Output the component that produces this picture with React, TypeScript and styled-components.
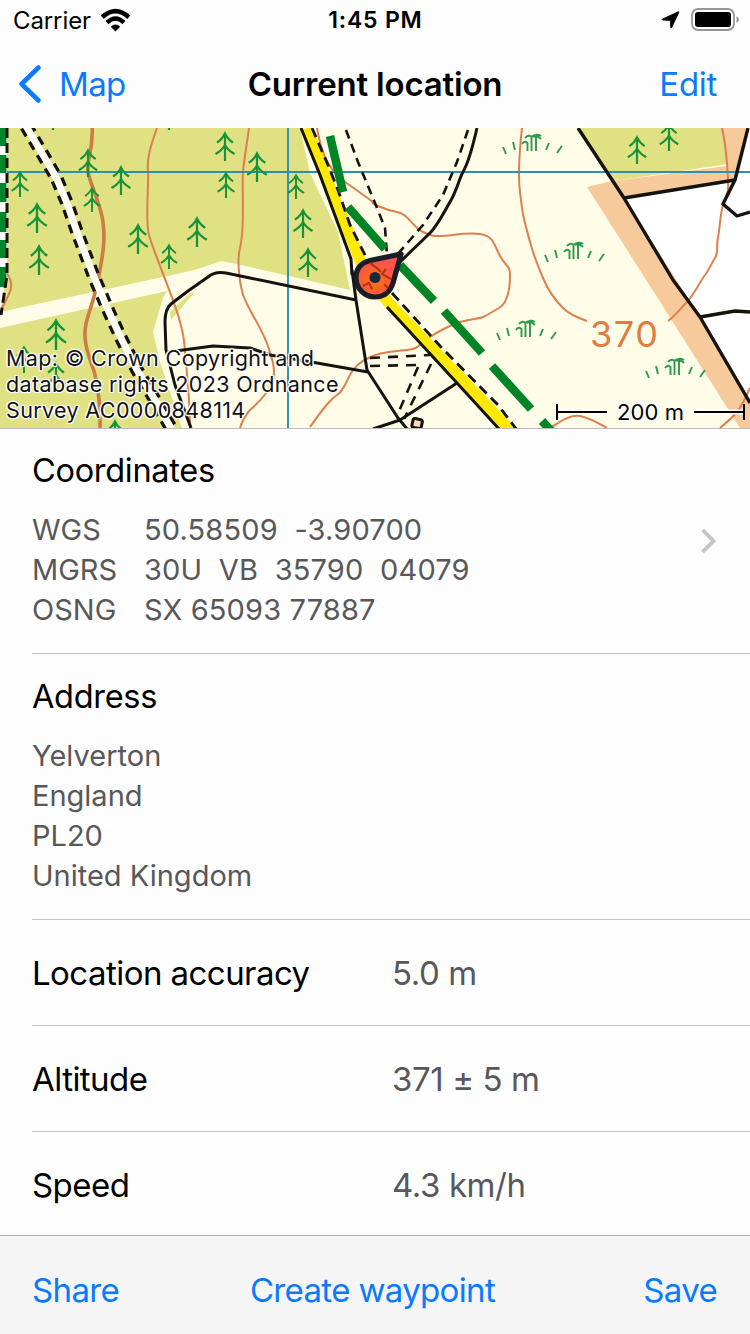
import React from "react";
import styled, { createGlobalStyle } from "styled-components";

const Global = createGlobalStyle`
  body { margin: 0; background: #fdfdfd; }
  * { box-sizing: border-box; }
`;

const Screen = styled.div`
  width: 750px;
  height: 1334px;
  display: flex;
  flex-direction: column;
  overflow: hidden;
  background: #fdfdfd;
  color: #000;
  font-family: Inter, "Liberation Sans", sans-serif;
`;

const StatusBar = styled.header`
  flex: none;
  height: 40px;
  padding: 0 12px 0 13px;
  display: grid;
  grid-template-columns: 1fr auto 1fr;
  align-items: center;
  font-size: 24px;
`;

const StatusGroup = styled.div<{ $end?: boolean }>`
  display: flex;
  align-items: center;
  justify-content: ${(p) => (p.$end ? "flex-end" : "flex-start")};
  gap: ${(p) => (p.$end ? "11px" : "9px")};
  margin-right: ${(p) => (p.$end ? "-1px" : "0")};
`;

const Carrier = styled.span`
  letter-spacing: -0.1px;
`;

const Clock = styled.span`
  font-weight: 600;
  font-size: 23px;
  letter-spacing: 0.8px;
`;

const NavBar = styled.nav`
  flex: none;
  height: 88px;
  padding: 0 33px;
  display: grid;
  grid-template-columns: 1fr auto 1fr;
  align-items: center;
`;

const TextButton = styled.button<{ $end?: boolean; $back?: boolean; $tight?: boolean }>`
  display: flex;
  align-items: center;
  gap: 17px;
  justify-self: ${(p) => (p.$end ? "end" : "start")};
  margin-left: ${(p) => (p.$back ? "-15px" : "0")};
  padding: 0;
  border: 0;
  background: none;
  color: #0a7aff;
  font: inherit;
  font-size: 33px;
  line-height: 40px;
  letter-spacing: ${(p) => (p.$tight ? "-0.65px" : "-0.3px")};
`;

const Title = styled.h1`
  margin: 0;
  font-size: 33px;
  line-height: 40px;
  font-weight: 600;
  letter-spacing: -0.2px;
`;

const MapPanel = styled.div`
  flex: none;
  position: relative;
  height: 301px;
  border-bottom: 1px solid #bcbcc0;
  svg { display: block; }
`;

const Attribution = styled.p`
  position: absolute;
  left: 6px;
  bottom: 5px;
  width: 345px;
  margin: 0;
  font-size: 21.5px;
  line-height: 26px;
  letter-spacing: 0.36px;
  color: #111;
  text-shadow: 1px 0 1px #fff, -1px 0 1px #fff, 0 1px 1px #fff, 0 -1px 1px #fff,
    1px 1px 1px #fff, -1px -1px 1px #fff, 1px -1px 1px #fff, -1px 1px 1px #fff;
`;

const Details = styled.main`
  flex: 1;
  min-height: 0;
  overflow: hidden;
  padding-left: 32px;
`;

const Section = styled.section<{ $h: number; $top: number }>`
  height: ${(p) => p.$h}px;
  padding: ${(p) => p.$top}px 33px 0 0;
  border-bottom: 1px solid #c3c3c6;
`;

const Heading = styled.h2`
  margin: 0 0 18px;
  font-size: 32.5px;
  line-height: 42px;
  font-weight: 400;
  letter-spacing: -0.3px;
`;

const CoordBlock = styled.div`
  display: flex;
  justify-content: space-between;
`;

const CoordTable = styled.dl`
  margin: 0;
  display: grid;
  grid-template-columns: 112px auto;
  font-size: 29px;
  line-height: 40px;
  color: #58585b;
  white-space: pre;
  dt, dd { margin: 0; }
  dd { letter-spacing: 0.15px; }
`;

const Disclosure = styled.svg`
  margin-top: 18px;
`;

const AddressLines = styled.address`
  font-style: normal;
  font-size: 29px;
  line-height: 40px;
  color: #58585b;
  white-space: pre-line;
`;

const ValueRow = styled.div<{ $last?: boolean }>`
  height: 106px;
  display: grid;
  grid-template-columns: 360px 1fr;
  align-items: center;
  border-bottom: ${(p) => (p.$last ? "0" : "1px solid #c3c3c6")};
  font-size: 33px;
  letter-spacing: -0.55px;
`;

const Value = styled.span`
  color: #58585b;
  letter-spacing: -0.4px;
`;

const Toolbar = styled.footer`
  flex: none;
  height: 99px;
  padding: 10px 33px 0 32px;
  display: grid;
  grid-template-columns: 1fr auto 1fr;
  column-gap: 0;
  align-items: center;
  background: #f5f5f5;
  border-top: 1px solid #b0b0b2;
`;

const ToolbarCentre = styled.div`
  margin-right: 4px;
`;

const WifiIcon = () => (
  <svg width="31" height="24" viewBox="0 0 31 24" fill="none" stroke="#000" strokeWidth="4.600">
    <path d="M2.200 9.200Q15.500-3 28.800 9.200" />
    <path d="M7 14.600Q15.500 6.600 24 14.600" strokeWidth="4.300" />
    <path d="M10.800 18.700Q15.500 14.400 20.200 18.700L15.500 23.400Z" fill="#000" stroke="none" />
  </svg>
);

const LocationIcon = () => (
  <svg width="19" height="18" viewBox="0 0 19 18" stroke="#000" strokeWidth="0.800">
    <path d="M17.200.8Q18.200.4 17.800 1.400L10.800 16.400Q10 17.800 9.700 16.400L9.300 9.400 1.800 9Q.4 8.600 1.700 7.900Z" />
  </svg>
);

const BatteryIcon = () => (
  <svg width="48" height="24" viewBox="0 0 48 24">
    <rect x="1" y="1" width="42" height="21" rx="6" fill="none" stroke="#979797" strokeWidth="1.800" />
    <rect x="4" y="4" width="36" height="15" rx="3" />
    <path d="M45.500 8Q48 9.500 48 11.500T45.500 15Z" fill="#979797" />
  </svg>
);

const BackIcon = () => (
  <svg width="24" height="40" viewBox="0 0 24 40" fill="none" stroke="#0a7aff" strokeWidth="4.600" strokeLinecap="round" strokeLinejoin="round">
    <path d="M20.500 3.500L3.500 20 20.500 36.500" />
  </svg>
);

const Tree = ({ x, y, h = 28 }: { x: number; y: number; h?: number }) => (
  <path
    transform={`translate(${x} ${y}) scale(${h / 28})`}
    d="M0 0V28M-8 9.500Q-3 6.500 0 0.500Q3 6.500 8 9.500M-9.500 21Q-3 17.500 0 12Q3 17.500 9.500 21"
  />
);

const TREES: [number, number, number][] = [
  [20, 172, 25], [37, 204, 29], [39, 246, 29], [88, 150, 27], [92, 188, 24], [121, 167, 28],
  [138, 225, 29], [169, 245, 24], [197, 218, 29], [225, 133, 28], [226, 173, 25], [257, 153, 29],
  [296, 175, 24], [303, 210, 28], [308, 249, 28], [637, 137, 27], [669, 124, 27], [56, 320, 30],
  [56, 363, 28], [24, 347, 26], [115, 421, 28], [53, 102, 28], [169, 103, 27],
];

const BRACKEN: [number, number][] = [[532, 142], [574, 250], [526, 328], [675, 366]];

const MapView = () => (
  <svg width="750" height="300" viewBox="0 128 750 300" fill="none">
    <defs>
      <radialGradient id="pinFill" cx="0.42" cy="0.6" r="0.6">
        <stop offset="0" stopColor="#ff7a1c" />
        <stop offset="0.350" stopColor="#fb6424" />
        <stop offset="0.700" stopColor="#fa5550" />
      </radialGradient>
    </defs>
    <rect y="128" width="750" height="300" fill="#fffde8" />
    {/* woodland */}
    <path fill="#dfe182" d="M0 128H300L310 173 338 232 350 290 250 267 222 261 194 270 163 277 0 312Z" />
    <path fill="#dfe182" d="M0 328L167 291 163 298 153 332 160 362 182 428H0Z" />
    <path fill="#dfe182" d="M176 314L171 320 170 312 190 293 195 292Z" />
    {/* enclosed fields and moor edge */}
    <path fill="#fff" d="M624 198L735 180 748 128H750V403L700 317Z" />
    <path fill="#dfe182" d="M578 128H722L728 164 613 181Z" />
    <path fill="#f7ca9b" d="M720 128H747L735 180 624 198 613 181 727 166Z" />
    <path fill="#f7ca9b" d="M587 187L612 181 624 198 700 317 750 403V428H740L643 275Z" />

    {/* contours */}
    <g stroke="#dd7f4e" strokeWidth="2">
      <path d="M92 125C94 150 86 160 88 172S101 205 103 222 104 250 98 280 84 320 85 337 93 365 95 375 101 400 100 428" stroke="#cd7d42" strokeWidth="3.600" />
      <path d="M157 128C149 150 147 160 148 172S145 220 149 235 172 295 178 315 184 340 185 352 190 400 190 428" />
      <path d="M249 128C246 150 244 160 243 172S244 215 242 235 237 250 239 272 245 300 250 310 264 332 270 352 279 385 250 410Q243 418 240 428" />
      <path d="M0 262L8 275Q14 284 9 294T0 312" />
      <path d="M317 128C320 145 325 168 345 182S375 203 373 203 385 210 397 212 413 228 423 232 430 236 440 236 466 232 480 234 494 245 500 256 510 265 510 275 509 302 499 308 487 315 483 317 467 319 457 323 442 329 430 337 419 349 407 350 380 353 373 356 359 362 353 370 345 390 337 395 320 413 310 427" />
      <path d="M522 128C520 145 519 160 519 175S521 198 522 208 527 230 530 242 538 266 543 278 557 302 563 308 575 317 587 321" />
      <path d="M722 128C726 145 727 160 728 178S726 195 723 205 720 228 718 237 719 252 715 258 709 270 705 275 693 296 687 302 675 316 668 321" />
      <path d="M550 428C560 422 570 414 580 416S600 424 607 428M720 428Q732 418 737 412T750 388" />
    </g>

    {/* grid */}
    <path d="M0 172H750M288 128V428" stroke="#2b90b4" strokeWidth="1.900" />

    <g stroke="#17933a" strokeWidth="2.200">
      {TREES.map(([x, y, h]) => <Tree key={`${x}-${y}`} x={x} y={y} h={h} />)}
    </g>
    <g stroke="#2a9a4c" strokeWidth="1.900">
      {BRACKEN.map(([x, y]) => (
        <path
          key={x}
          transform={`translate(${x} ${y})`}
          d="M-29 5l3 7M-19 0l2 8M17 1l-3 7M30 4l-5 7M-10 2q3-4 5.500-1v8M-7-4q4-4 6.500-1v14M1-5q4-2 8 2M-1-5q5-4 10-1M4-5v14"
        />
      ))}
    </g>

    {/* bridleway along the western edge */}
    <path d="M0 128H7V275L0 312Z" fill="#fff" />
    <path d="M2 128V146M2 155V173M2 183V202M2 212V232M2 240V258M2 267V287" stroke="#00872c" strokeWidth="9" />
    <path d="M7 128V275L1 315" stroke="#15130d" strokeWidth="3" strokeDasharray="10 5" />
    <path d="M26 126L39 148 56 177 67 203 77 232 94 277 109 312 122 340 137 370 155 400 172 430" stroke="#15130d" strokeWidth="13.500" strokeDasharray="9 6.500" />
    <path d="M26 126L39 148 56 177 67 203 77 232 94 277 109 312 122 340 137 370 155 400 172 430" stroke="#fffef4" strokeWidth="7" />

    {/* walls */}
    <g stroke="#15130d" strokeWidth="3" strokeLinejoin="round">
      <path d="M356 300L250 278 226 273Q215 271 208 277L188 291 171 304Q165 309 165 322L166 350 175 385 191 428" />
      <path d="M168 352L213 346 250 348 270 355 317 363 368 372" />
      <path d="M352 270L356 300 367 370 398 418 408 430M373 429L400 420 457 383" />
      <path d="M477 128C472 150 467 165 463 172S457 190 450 202 437 226 430 233 410 252 398 264" />
      <path d="M578 128L624 198 673 280 700 317 750 403M624 198L735 180M748 128L735 180 723 204 737 216 750 212M700 317L735 311 750 312" strokeWidth="3.400" />
    </g>

    {/* footpaths */}
    <g stroke="#15130d" strokeWidth="2.600" strokeDasharray="9 6">
      <path d="M346 130L358 162 375 203 385 228 387 255M468 130L457 162 443 195 423 225 396 256" />
    </g>
    <g stroke="#15130d" strokeWidth="2.600" strokeDasharray="10 8">
      <path d="M370 358L430 355M370 366L416 365M418 367L397 416M431 364L404 419" />
    </g>

    {/* lane */}
    <path d="M307 128L325 175 345 223 359 258 370 280 388 302 428 344 478 396 510 430" stroke="#ffe900" strokeWidth="11" />
    <path d="M301 128L320 175 340 229 351 259 352 275M387 307L457 383 500 430" stroke="#15130d" strokeWidth="3" />
    <path d="M312 128L328 165 338 190 350 225 366 257M392 293L440 346 498 405 517 430" stroke="#15130d" strokeWidth="2.800" strokeDasharray="10 6" />
    <rect x="412.500" y="419" width="9.500" height="9" rx="2" transform="rotate(12 417 423)" fill="#fbd9bd" stroke="#15130d" strokeWidth="3" />

    {/* bridleway */}
    <path d="M330 136L343 192M348 207L385 249M400 265L434 301M444 311L482 353M492 366L531 409M542 421L555 435" stroke="#008526" strokeWidth="8.500" />

    {/* current position */}
    <path d="M401 254L370 260.500C360 263 356 270 356 278A19 19 0 0 0 375 297C384 297 390 292 393 283Z" fill="url(#pinFill)" stroke="#1b1c24" strokeWidth="5.200" strokeLinejoin="round" />
    <path d="M370 263L377 268 381 272M386 269L382 274 391 279M363 286L369 283 372 289M384 284L388 288" stroke="#b8301c" strokeWidth="2.200" />
    <circle cx="375" cy="277.500" r="5.600" fill="#1b2a38" />

    <text x="590" y="347" fontFamily="Inter, sans-serif" fontSize="36" fill="#df7c40" textLength="68">370</text>
    <g stroke="#fff" strokeWidth="5">
      <path d="M557 412H607M694 412H745" />
    </g>
    <path d="M557 412H607M694 412H745M557 404V420M744 404V420" stroke="#000" strokeWidth="2" />
    <text x="617" y="420" fontFamily="Inter, sans-serif" fontSize="22" fill="#000" stroke="#fff" strokeWidth="3" paintOrder="stroke" textLength="67">200 m</text>
  </svg>
);

const COORDS = [
  ["WGS", "50.58509  -3.90700"],
  ["MGRS", "30U  VB  35790  04079"],
  ["OSNG", "SX 65093 77887"],
];

const VALUES = [
  ["Location accuracy", "5.0 m"],
  ["Altitude", "371 ± 5 m"],
  ["Speed", "4.3 km/h"],
];

export default function App() {
  return (
    <Screen>
      <Global />
      <StatusBar>
        <StatusGroup>
          <Carrier>Carrier</Carrier>
          <WifiIcon />
        </StatusGroup>
        <Clock>1:45 PM</Clock>
        <StatusGroup $end>
          <LocationIcon />
          <BatteryIcon />
        </StatusGroup>
      </StatusBar>
      <NavBar>
        <TextButton $back $tight><BackIcon />Map</TextButton>
        <Title>Current location</Title>
        <TextButton $end>Edit</TextButton>
      </NavBar>
      <MapPanel>
        <MapView />
        <Attribution>
          Map: © Crown Copyright and<br />database rights 2023 Ordnance<br />Survey AC0000848114
        </Attribution>
      </MapPanel>
      <Details>
        <Section $h={225} $top={21}>
          <Heading>Coordinates</Heading>
          <CoordBlock>
            <CoordTable>
              {COORDS.map(([k, v]) => (
                <React.Fragment key={k}><dt>{k}</dt><dd>{v}</dd></React.Fragment>
              ))}
            </CoordTable>
            <Disclosure width="17" height="26" viewBox="0 0 17 26" fill="none" stroke="#c4c4c7" strokeWidth="3.800">
              <path d="M2.500 2L13.500 13 2.500 24" />
            </Disclosure>
          </CoordBlock>
        </Section>
        <Section $h={266} $top={22}>
          <Heading>Address</Heading>
          <AddressLines>{"Yelverton\nEngland\nPL20\nUnited Kingdom"}</AddressLines>
        </Section>
        {VALUES.map(([label, value], i) => (
          <ValueRow key={label} $last={i === 2}>
            <span>{label}</span>
            <Value>{value}</Value>
          </ValueRow>
        ))}
      </Details>
      <Toolbar>
        <TextButton $tight>Share</TextButton>
        <ToolbarCentre><TextButton $tight>Create waypoint</TextButton></ToolbarCentre>
        <TextButton $end $tight>Save</TextButton>
      </Toolbar>
    </Screen>
  );
}
